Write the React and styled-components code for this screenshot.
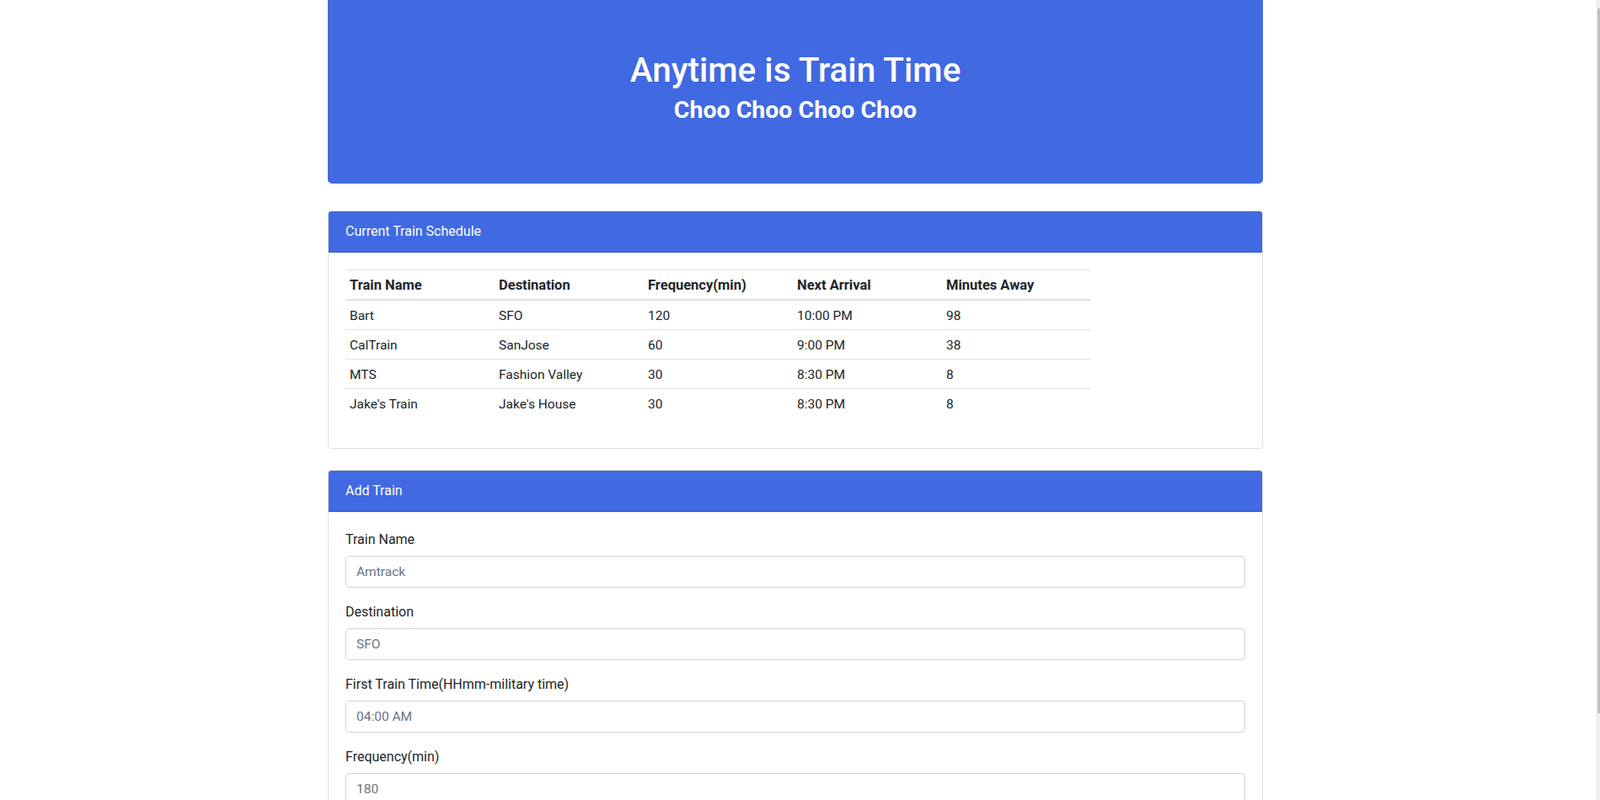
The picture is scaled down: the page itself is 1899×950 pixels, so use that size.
import React from "react";
import styled, { createGlobalStyle } from "styled-components";

const Global = createGlobalStyle`
  *, *::before, *::after { box-sizing: border-box; }
  html, body { margin: 0; padding: 0; }
  body {
    font-family: Roboto, "Noto Sans", "Liberation Sans", sans-serif;
    font-size: 16px;
    line-height: 1.5;
    color: #212529;
    background: #fff;
    padding-right: 11px;
  }
`;

const ScrollTrack = styled.div`
  position: fixed;
  top: 0;
  right: 0;
  width: 4px;
  height: 100vh;
  background: #f0f0f0;
  border-left: 1px solid #e8e8e8;
`;

const ScrollThumb = styled.div`
  position: absolute;
  top: 10px;
  right: 0;
  width: 3px;
  height: 837px;
  background: #c1c1c1;
`;

const Container = styled.div`
  width: 1110px;
  margin: 0 auto;
  padding-bottom: 40px;
`;

const Jumbotron = styled.header`
  background: #4169e1;
  color: #fff;
  text-align: center;
  border-radius: 0 0 5px 5px;
  padding: 59px 32px 71px;
  margin-bottom: 32px;
`;

const Title = styled.h1`
  margin: 0 0 8px;
  font-size: 40.5px;
  line-height: 48px;
  font-weight: 500;
`;

const Subtitle = styled.h2`
  margin: 0;
  font-size: 28.5px;
  line-height: 32px;
  font-weight: 700;
`;

const Card = styled.section`
  border: 1px solid rgba(0, 0, 0, 0.125);
  border-radius: 4px;
  overflow: hidden;
  margin-bottom: ${(p) => p.$gap || 0}px;
`;

const CardHeader = styled.div`
  background: #4169e1;
  color: #fff;
  padding: 12px 20px;
  line-height: 24px;
  font-size: 16px;
  border-bottom: 1px solid rgba(0, 0, 0, 0.125);
`;

const CardBody = styled.div`
  padding: 20px;
`;

const Table = styled.table`
  width: 885px;
  table-layout: fixed;
  border-collapse: collapse;
  margin-bottom: 16px;
  font-size: 15.5px;
`;

const Th = styled.th`
  text-align: left;
  font-weight: 700;
  font-size: 16.5px;
  padding: 6px 5px 4px;
  line-height: 24px;
  border-top: 1px solid #dee2e6;
  border-bottom: 2px solid #dee2e6;
`;

const Td = styled.td`
  padding: 6px 5px 4px;
  line-height: 24px;
  border-top: 1px solid #dee2e6;
`;

const Group = styled.div`
  margin-bottom: 16px;
`;

const Label = styled.label`
  display: block;
  padding-top: 1px;
  margin-bottom: 7px;
  line-height: 24px;
  font-size: 16px;
`;

const Input = styled.input`
  display: block;
  width: 100%;
  height: 38px;
  padding: 6px 12px;
  font-family: inherit;
  font-size: 15.5px;
  line-height: 24px;
  color: #495057;
  background: #fff;
  border: 1px solid #ced4da;
  border-radius: 4px;
  &::placeholder { color: #6c757d; opacity: 1; }
`;

const Button = styled.button`
  font-family: inherit;
  font-size: 16px;
  line-height: 24px;
  padding: 6px 12px;
  color: #fff;
  background: #4169e1;
  border: 1px solid #4169e1;
  border-radius: 4px;
`;

const trains = [
  ["Bart", "SFO", "120", "10:00 PM", "98"],
  ["CalTrain", "SanJose", "60", "9:00 PM", "38"],
  ["MTS", "Fashion Valley", "30", "8:30 PM", "8"],
  ["Jake's Train", "Jake's House", "30", "8:30 PM", "8"],
];

const fields = [
  ["Train Name", "Amtrack"],
  ["Destination", "SFO"],
  ["First Train Time(HHmm-military time)", "04:00 AM"],
  ["Frequency(min)", "180"],
];

export default function App() {
  return (
    <>
      <Global />
      <ScrollTrack>
        <ScrollThumb />
      </ScrollTrack>
      <Container>
        <Jumbotron>
          <Title>Anytime is Train Time</Title>
          <Subtitle>Choo Choo Choo Choo</Subtitle>
        </Jumbotron>

        <Card $gap={25}>
          <CardHeader>Current Train Schedule</CardHeader>
          <CardBody>
            <Table>
              <thead>
                <tr>
                  <Th>Train Name</Th>
                  <Th>Destination</Th>
                  <Th>Frequency(min)</Th>
                  <Th>Next Arrival</Th>
                  <Th>Minutes Away</Th>
                </tr>
              </thead>
              <tbody>
                {trains.map((r, i) => (
                  <tr key={i}>
                    {r.map((c, j) => (
                      <Td key={j}>{c}</Td>
                    ))}
                  </tr>
                ))}
              </tbody>
            </Table>
          </CardBody>
        </Card>

        <Card>
          <CardHeader>Add Train</CardHeader>
          <CardBody>
            {fields.map(([label, ph]) => (
              <Group key={label}>
                <Label>{label}</Label>
                <Input type="text" placeholder={ph} />
              </Group>
            ))}
            <Button type="button">Submit</Button>
          </CardBody>
        </Card>
      </Container>
    </>
  );
}
